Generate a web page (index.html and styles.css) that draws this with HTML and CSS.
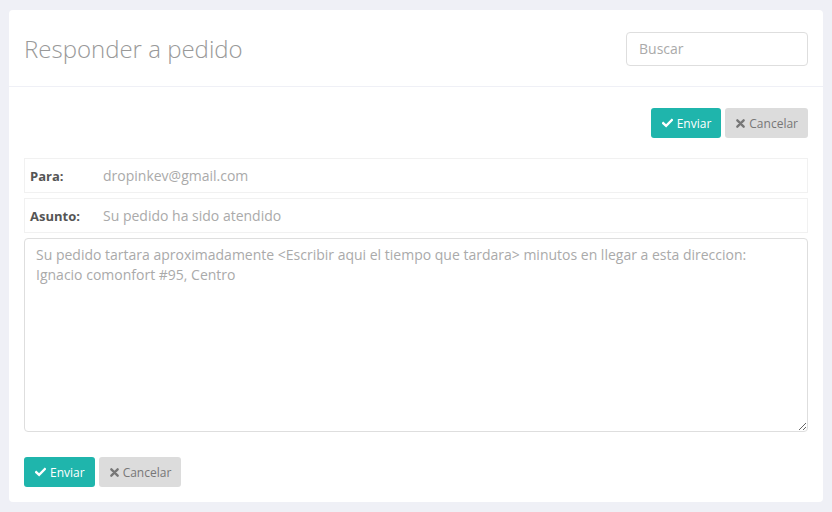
FILE: index.html
```html
<!DOCTYPE html>
<html lang="es">
<head>
<meta charset="utf-8">
<title>Responder a pedido</title>
<link rel="stylesheet" href="styles.css">
</head>
<body>
<div class="card">
  <div class="card-header">
    <h1 class="title">Responder a pedido</h1>
    <input class="search" type="text" placeholder="Buscar">
  </div>
  <div class="card-body">
    <div class="actions actions-right">
      <button class="btn btn-primary"><svg class="ico" viewBox="0 0 12 10" width="11" height="10"><polyline points="1.3,5.2 4.5,8.2 10.7,1.8" fill="none" stroke="#fff" stroke-width="2.6" stroke-linecap="square"/></svg>Enviar</button>
      <button class="btn btn-default"><svg class="ico" viewBox="0 0 10 10" width="9" height="9"><path d="M1.5 1.5 L8.5 8.5 M8.5 1.5 L1.5 8.5" stroke="#777" stroke-width="2.6" stroke-linecap="round"/></svg>Cancelar</button>
    </div>
    <div class="field">
      <span class="label">Para:</span>
      <span class="value">dropinkev@gmail.com</span>
    </div>
    <div class="field">
      <span class="label">Asunto:</span>
      <span class="value">Su pedido ha sido atendido</span>
    </div>
    <textarea class="message">Su pedido tartara aproximadamente &lt;Escribir aqui el tiempo que tardara&gt; minutos en llegar a esta direccion: Ignacio comonfort #95, Centro</textarea>
    <div class="actions">
      <button class="btn btn-primary"><svg class="ico" viewBox="0 0 12 10" width="11" height="10"><polyline points="1.3,5.2 4.5,8.2 10.7,1.8" fill="none" stroke="#fff" stroke-width="2.6" stroke-linecap="square"/></svg>Enviar</button>
      <button class="btn btn-default"><svg class="ico" viewBox="0 0 10 10" width="9" height="9"><path d="M1.5 1.5 L8.5 8.5 M8.5 1.5 L1.5 8.5" stroke="#777" stroke-width="2.6" stroke-linecap="round"/></svg>Cancelar</button>
    </div>
  </div>
</div>
</body>
</html>
```
FILE: styles.css
```css
* { box-sizing: border-box; }
html, body { margin: 0; padding: 0; }
body {
  background: #eff0f6;
  font-family: "Open Sans", "Liberation Sans", sans-serif;
  padding: 10px 9px 10px 9px;
}
.card {
  background: #fff;
  border-radius: 4px;
  width: 814px;
  height: 492px;
}
.card-header {
  height: 77px;
  border-bottom: 1px solid #eff0f6;
  display: flex;
  align-items: center;
  justify-content: space-between;
  padding: 0 15px 0 15px;
}
.title {
  margin: 0;
  font-weight: 300;
  font-size: 24px;
  color: #999;
  padding-top: 1px;
}
.search {
  width: 182px;
  height: 34px;
  border: 1px solid #dedede;
  border-radius: 4px;
  padding: 0 12px;
  font-family: inherit;
  font-size: 14px;
  color: #555;
  outline: none;
  margin-top: 1px;
}
.search::placeholder { color: #aaa; }
.card-body {
  padding: 21px 15px 15px 15px;
}
.actions {
  display: flex;
  gap: 4px;
}
.actions-right {
  justify-content: flex-end;
  margin-bottom: 20px;
}
.btn {
  height: 30px;
  border: none;
  border-radius: 3px;
  font-family: inherit;
  font-size: 12px;
  padding: 0 10px 0 11px;
  display: inline-flex;
  align-items: center;
  cursor: pointer;
}
.ico { margin-right: 4px; }
.btn-primary { background: #1fb5ac; color: #fff; }
.btn-default { background: #dcdcdc; color: #777; }
.field {
  height: 35px;
  border: 1px solid #f1f1f1;
  display: flex;
  align-items: center;
  margin-bottom: 5px;
  font-size: 14px;
}
.label {
  width: 78px;
  padding-left: 5px;
  font-weight: 700;
  font-size: 13px;
  color: #555;
}
.value { color: #aaa; }
.message {
  display: block;
  width: 784px;
  height: 194px;
  border: 1px solid #dedede;
  border-radius: 4px;
  padding: 6px 11px;
  font-family: inherit;
  font-size: 14px;
  line-height: 20px;
  color: #aaa;
  margin: 0 0 25px 0;
  resize: vertical;
  outline: none;
}
```
